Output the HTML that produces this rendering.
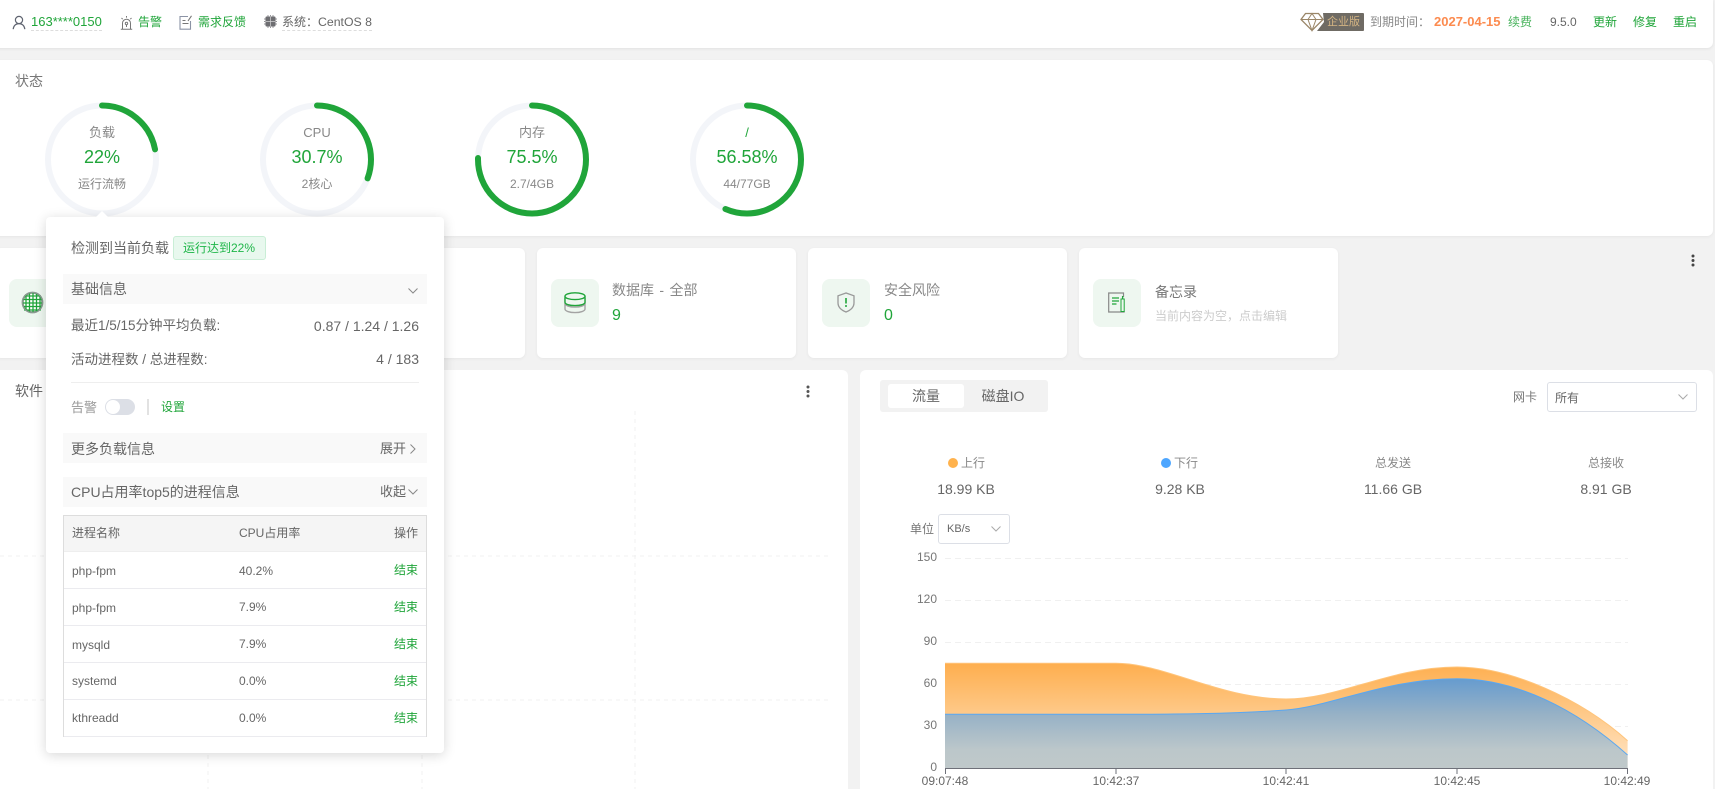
<!DOCTYPE html>
<html lang="zh">
<head>
<meta charset="utf-8">
<title>状态</title>
<style>
html,body{margin:0;padding:0;width:1715px;height:789px;overflow:hidden;background:#f2f2f2;}
body{position:relative;font-family:"Liberation Sans","Noto Sans CJK SC",sans-serif;font-size:12px;color:#666;}
.b{position:absolute;background:#fff;box-sizing:border-box;}
.t{position:absolute;white-space:nowrap;line-height:20px;height:20px;}
.c{transform:translateX(-50%);text-align:center;}
.r{transform:translateX(-100%);}
.g{color:#20a53a;}
svg{position:absolute;overflow:visible;}
.card{top:248px;width:259px;height:110px;border-radius:6px;box-shadow:0 1px 3px rgba(0,0,0,.05);}
.ib{position:absolute;top:279px;width:48px;height:48px;border-radius:8px;background:#eef7f0;}
.bar{position:absolute;left:63px;width:364px;height:30px;background:#f9f9f9;}
.row{position:absolute;left:64px;width:362px;border-bottom:1px solid #ebebef;box-sizing:border-box;}
</style>
</head>
<body>
<!-- header -->
<div class="b" style="left:-10px;top:0;width:1722.5px;height:48px;border-radius:0 0 6px 6px;box-shadow:0 1px 3px rgba(0,0,0,.07)"></div>
<svg style="left:12px;top:15px" width="14" height="15" viewBox="0 0 14 15" fill="none" stroke="#5f6470" stroke-width="1.2"><circle cx="7" cy="5" r="3.6"/><path d="M1.2 14.2c.3-3.6 2.7-5.6 5.8-5.6s5.500 2 5.800 5.600"/></svg>
<div class="t g" style="left:31px;top:12px;font-size:13px;border-bottom:1px dashed #ddd;height:18px">163****0150</div>
<svg style="left:120px;top:15px" width="13" height="15" viewBox="0 0 13 15" fill="none" stroke="#777" stroke-width="1"><path d="M2.500 14V8.200a4 4 0 0 1 8 0V14M.8 14.300h11.400M6.500 1v1.600M1.500 3l1.200 1.200M11.500 3l-1.200 1.200"/><circle cx="6.500" cy="8.500" r="1.200"/><path d="M6.500 9.700V12"/></svg>
<div class="t g" style="left:138px;top:12px">告警</div>
<svg style="left:179px;top:15px" width="14" height="15" viewBox="0 0 14 15" fill="none" stroke="#777" stroke-width="1.100"><path d="M9 1.500H1v12.700h10.500V6" stroke="#8b93a5"/><path d="M12.500 .8 9 6M3.500 5.500h3M3.500 8.500h6"/></svg>
<div class="t g" style="left:198px;top:12px">需求反馈</div>
<svg style="left:264px;top:15px" width="13" height="13" viewBox="0 0 13 13"><rect x="1.500" y="1.500" width="10" height="10" rx="1" fill="#6e6e72"/><path d="M4 0v13M6.500 0v13M9 0v13M0 4h13M0 6.500h13M0 9h13" stroke="#6e6e72" stroke-width=".7"/><path d="M6.500 1.500v10M1.500 6.500h10" stroke="#fff" stroke-width=".7" opacity=".7"/></svg>
<div style="position:absolute;left:282px;top:30px;width:90px;height:0;border-top:1px dashed #ddd"></div>
<div class="t" style="left:282px;top:12px">系统：</div>
<div class="t" style="left:318px;top:12px;font-size:12.300px">CentOS 8</div>

<svg style="left:1300px;top:12px" width="24" height="20" viewBox="0 0 24 20" fill="#fff" stroke="#9a8668" stroke-width="1.300"><path d="M5.500 1.500h13l4.500 6L12 18.500 1 7.500z"/><path d="M1 7.500h22M8 7.500 12 18.500 16 7.500M8 7.500l4-6 4 6" stroke-width="1"/></svg>
<div style="position:absolute;left:1315px;top:13px;width:49px;height:18px;background:#6f6b64;clip-path:polygon(8px 0,100% 0,100% 100%,2px 100%,9px 50%);border-radius:1px"></div>
<div class="t" style="left:1327px;top:12px;font-size:11px;color:#d4b483">企业版</div>
<div class="t" style="left:1370px;top:12px;color:#888">到期时间：</div>
<div class="t" style="left:1434px;top:12px;font-size:13px;font-weight:bold;color:#fc8b4f">2027-04-15</div>
<div class="t" style="left:1508px;top:12px;color:#48b35c">续费</div>
<div class="t" style="left:1550px;top:12px;font-size:12px">9.5.0</div>
<div class="t g" style="left:1593px;top:12px">更新</div>
<div class="t g" style="left:1633px;top:12px">修复</div>
<div class="t g" style="left:1673px;top:12px">重启</div>

<!-- status -->
<div class="b" style="left:-10px;top:60px;width:1722.5px;height:176px;border-radius:6px;box-shadow:0 1px 3px rgba(0,0,0,.05)"></div>
<div class="t" style="left:15px;top:71px;font-size:14px;color:#777">状态</div>
<svg style="left:0;top:0" width="900" height="240" fill="none" stroke-width="6">
  <g stroke="#f3f5f9"><circle cx="102" cy="159.500" r="54"/><circle cx="317" cy="159.500" r="54"/><circle cx="532" cy="159.500" r="54"/><circle cx="747" cy="159.500" r="54"/></g>
  <g stroke="#20a53a" stroke-linecap="round">
    <circle cx="102" cy="159.500" r="54" pathLength="100" stroke-dasharray="22 100" transform="rotate(-90 102 159.500)"/>
    <circle cx="317" cy="159.500" r="54" pathLength="100" stroke-dasharray="30.700 100" transform="rotate(-90 317 159.500)"/>
    <circle cx="532" cy="159.500" r="54" pathLength="100" stroke-dasharray="75.500 100" transform="rotate(-90 532 159.500)"/>
    <circle cx="747" cy="159.500" r="54" pathLength="100" stroke-dasharray="56.580 100" transform="rotate(-90 747 159.500)"/>
  </g>
</svg>
<div class="t c" style="left:102px;top:123px;font-size:13px;color:#888">负载</div>
<div class="t c g" style="left:102px;top:147px;font-size:18px">22%</div>
<div class="t c" style="left:102px;top:174px;color:#888">运行流畅</div>
<div class="t c" style="left:317px;top:123px;font-size:13px;color:#888">CPU</div>
<div class="t c g" style="left:317px;top:147px;font-size:18px">30.7%</div>
<div class="t c" style="left:317px;top:174px;color:#888">2核心</div>
<div class="t c" style="left:532px;top:123px;font-size:13px;color:#888">内存</div>
<div class="t c g" style="left:532px;top:147px;font-size:18px">75.5%</div>
<div class="t c" style="left:532px;top:174px;color:#888">2.7/4GB</div>
<div class="t c" style="left:747px;top:123px;font-size:13px;color:#20a53a">/</div>
<div class="t c g" style="left:747px;top:147px;font-size:18px">56.58%</div>
<div class="t c" style="left:747px;top:174px;color:#888">44/77GB</div>

<!-- cards -->
<div class="b card" style="left:-5px"></div>
<div class="b card" style="left:266px"></div>
<div class="b card" style="left:537px"></div>
<div class="b card" style="left:808px"></div>
<div class="b card" style="left:1079px"></div>

<div class="ib" style="left:9px"></div>
<svg style="left:22px;top:292px" width="21" height="21" viewBox="0 0 21 21" fill="none"><circle cx="10.500" cy="10.500" r="9.600" fill="#fff" stroke="#7e9486" stroke-width="1.600"/><path d="M2 4h17M1 7.500h19M1 11h19M1 14.500h19M2 18h17M4 2v17M7.500 1v19M11 1v19M14.500 1v19M18 3v15" stroke="#20a53a" stroke-width="1.300"/><circle cx="10.500" cy="10.500" r="10.200" stroke="#8a9a90" stroke-width="1.400"/></svg>

<div class="ib" style="left:551px"></div>
<svg style="left:564px;top:292px" width="22" height="22" viewBox="0 0 22 22" fill="none" stroke-width="1.400"><path d="M1 6v11c0 2 4.500 3.600 10 3.600S21 19 21 17V6" stroke="#a3a3a3"/><path d="M1 11.500c0 2 4.500 3.600 10 3.600s10-1.600 10-3.600" stroke="#a3a3a3"/><path d="M1 4.200v6c0 2 4.500 3.400 10 3.400s10-1.400 10-3.400v-6" stroke="#20a53a" fill="#eef7f0"/><ellipse cx="11" cy="4.200" rx="10" ry="3.400" stroke="#20a53a" fill="#eef7f0"/></svg>
<div class="t" style="left:612px;top:280px;font-size:14px;color:#888;word-spacing:1.500px">数据库 - 全部</div>
<div class="t g" style="left:612px;top:306px;font-size:16px">9</div>

<div class="ib" style="left:822px"></div>
<svg style="left:837px;top:292px" width="18" height="21" viewBox="0 0 18 21" fill="none"><path d="M9 1 1 3.800v7c0 4.500 3.500 7.500 8 9.200 4.500-1.700 8-4.700 8-9.200v-7z" stroke="#999" stroke-width="1.300"/><path d="M9 6v5.500" stroke="#20a53a" stroke-width="1.600"/><circle cx="9" cy="14" r="1" fill="#20a53a"/></svg>
<div class="t" style="left:884px;top:280px;font-size:14px;color:#888">安全风险</div>
<div class="t g" style="left:884px;top:306px;font-size:16px">0</div>

<div class="ib" style="left:1093px"></div>
<svg style="left:1108px;top:292px" width="18" height="21" viewBox="0 0 18 21" fill="none"><path d="M15.500 5V1H.7v19h16" stroke="#888" stroke-width="1.200"/><rect x="13" y="7" width="3.200" height="12.500" stroke="#20a53a" stroke-width="1"/><path d="M14.600 4v3M4 6h7M4 9h7M4 12h4.500" stroke="#20a53a" stroke-width="1.300"/></svg>
<div class="t" style="left:1155px;top:282px;font-size:14px;color:#777">备忘录</div>
<div class="t" style="left:1155px;top:306px;color:#ccc">当前内容为空，点击编辑</div>

<svg style="left:1691px;top:254px" width="4" height="13" viewBox="0 0 4 13" fill="#444"><circle cx="2" cy="2" r="1.500"/><circle cx="2" cy="6.500" r="1.500"/><circle cx="2" cy="11" r="1.500"/></svg>

<!-- left panel -->
<div class="b" style="left:-10px;top:370px;width:858px;height:430px;border-radius:6px"></div>
<svg style="left:0;top:370px" width="848" height="419" fill="none" stroke="#f1f1f1" stroke-dasharray="4 4"><path d="M208 41V419M422 41V419M635 41V419M0 186H830M0 330H830"/></svg>
<div class="t" style="left:15px;top:381px;font-size:14px">软件</div>
<svg style="left:806px;top:385px" width="4" height="13" viewBox="0 0 4 13" fill="#555"><circle cx="2" cy="2" r="1.500"/><circle cx="2" cy="6.500" r="1.500"/><circle cx="2" cy="11" r="1.500"/></svg>

<!-- right panel -->
<div class="b" style="left:860px;top:370px;width:852.500px;height:430px;border-radius:6px"></div>
<div style="position:absolute;left:880px;top:380px;width:168px;height:32px;background:#f2f2f2;border-radius:3px"></div>
<div style="position:absolute;left:888px;top:384px;width:76px;height:24px;background:#fff;border-radius:3px"></div>
<div class="t c" style="left:926px;top:386px;font-size:14px">流量</div>
<div class="t c" style="left:1003px;top:386px;font-size:14px">磁盘IO</div>
<div class="t" style="left:1513px;top:387px;color:#777">网卡</div>
<div class="b" style="left:1547px;top:382px;width:150px;height:30px;border:1px solid #dcdfe6;border-radius:3px"></div>
<div class="t" style="left:1555px;top:388px">所有</div>
<svg style="left:1678px;top:394px" width="10" height="6" fill="none" stroke="#aaa"><path d="M.5.500 5 5 9.500.500"/></svg>

<div style="position:absolute;left:948px;top:458px;width:10px;height:10px;border-radius:50%;background:#ffb24d"></div>
<div class="t" style="left:961px;top:453px;color:#888">上行</div>
<div style="position:absolute;left:1161px;top:458px;width:10px;height:10px;border-radius:50%;background:#4da6ff"></div>
<div class="t" style="left:1174px;top:453px;color:#888">下行</div>
<div class="t c" style="left:1393px;top:453px;color:#888">总发送</div>
<div class="t c" style="left:1606px;top:453px;color:#888">总接收</div>
<div class="t c" style="left:966px;top:479px;font-size:14px">18.99 KB</div>
<div class="t c" style="left:1180px;top:479px;font-size:14px">9.28 KB</div>
<div class="t c" style="left:1393px;top:479px;font-size:14px">11.66 GB</div>
<div class="t c" style="left:1606px;top:479px;font-size:14px">8.91 GB</div>

<div class="t" style="left:910px;top:519px;color:#777">单位</div>
<div class="b" style="left:938px;top:514px;width:72px;height:30px;border:1px solid #dcdfe6;border-radius:3px"></div>
<div class="t" style="left:947px;top:519px;font-size:11px">KB/s</div>
<svg style="left:991px;top:526px" width="10" height="6" fill="none" stroke="#aaa"><path d="M.5.500 5 5 9.500.500"/></svg>

<svg style="left:0;top:0" width="1715" height="789">
  <defs>
    <linearGradient id="o" x1="0" y1="663" x2="0" y2="768" gradientUnits="userSpaceOnUse"><stop offset="0" stop-color="#feae4e"/><stop offset="1" stop-color="#ffe6c8"/></linearGradient>
    <linearGradient id="bl" x1="0" y1="678" x2="0" y2="768" gradientUnits="userSpaceOnUse"><stop offset="0" stop-color="#659bcf"/><stop offset=".4" stop-color="#96b1c6"/><stop offset=".8" stop-color="#bcc7ca"/><stop offset="1" stop-color="#bfc8ca"/></linearGradient>
  </defs>
  <path d="M945 558.500H1628M945 600.500H1628M945 642.500H1628M945 684.500H1628M945 726.500H1628" stroke="#f0f0f0" stroke-dasharray="6 4" fill="none"/>
  <path d="M945 663.300H1116C1165 663.300 1220 699 1286 699C1340 699 1390 667 1457 667C1510 667 1580 698 1627.600 740.700V768H945Z" fill="url(#o)"/>
  <path d="M945 663.300H1116C1165 663.300 1220 699 1286 699C1340 699 1390 667 1457 667C1510 667 1580 698 1627.600 740.700" fill="none" stroke="#ffc47a"/>
  <path d="M945 714.300H1116C1170 714.300 1230 714 1286 710C1330 707 1385 678.700 1457 678.700C1515 678.700 1575 708 1627.600 755V768H945Z" fill="url(#bl)"/>
  <path d="M945 714.300H1116C1170 714.300 1230 714 1286 710C1330 707 1385 678.700 1457 678.700C1515 678.700 1575 708 1627.600 755" fill="none" stroke="#5aa7f0"/>
  <path d="M945 768.500H1628M945.500 768V774M1116 768V774M1286 768V774M1457 768V774M1627.500 768V774" stroke="#6e7079" fill="none"/>
</svg>
<div class="t r" style="left:937px;top:547px;color:#777">150</div>
<div class="t r" style="left:937px;top:589px;color:#777">120</div>
<div class="t r" style="left:937px;top:631px;color:#777">90</div>
<div class="t r" style="left:937px;top:673px;color:#777">60</div>
<div class="t r" style="left:937px;top:715px;color:#777">30</div>
<div class="t r" style="left:937px;top:757px;color:#777">0</div>
<div class="t c" style="left:945px;top:771px">09:07:48</div>
<div class="t c" style="left:1116px;top:771px">10:42:37</div>
<div class="t c" style="left:1286px;top:771px">10:42:41</div>
<div class="t c" style="left:1457px;top:771px">10:42:45</div>
<div class="t c" style="left:1627px;top:771px">10:42:49</div>

<!-- popover -->
<div class="b" style="left:46px;top:217px;width:398px;height:536px;border-radius:4px;box-shadow:0 2px 12px rgba(0,0,0,.16)"></div>
<div style="position:absolute;left:96px;top:211px;width:0;height:0;border-left:6px solid transparent;border-right:6px solid transparent;border-bottom:6px solid #fff"></div>
<div class="t" style="left:71px;top:238px;font-size:14px;color:#666">检测到当前负载</div>
<div style="position:absolute;left:173px;top:236px;width:93px;height:24px;box-sizing:border-box;background:#e8f8ee;border:1px solid #c9eed6;border-radius:3px"></div>
<div class="t" style="left:183px;top:238px;color:#20b64a">运行达到22%</div>

<div class="bar" style="top:274px"></div>
<div class="t" style="left:71px;top:279px;font-size:14px">基础信息</div>
<svg style="left:408px;top:288px" width="10" height="6" fill="none" stroke="#888"><path d="M.5.500 5 5 9.500.500"/></svg>
<div class="t" style="left:71px;top:316px;font-size:13.500px">最近1/5/15分钟平均负载:</div>
<div class="t r" style="left:419px;top:316px;font-size:14px">0.87 / 1.24 / 1.26</div>
<div class="t" style="left:71px;top:350px;font-size:13.500px">活动进程数 / 总进程数:</div>
<div class="t r" style="left:419px;top:349px;font-size:14px">4 / 183</div>
<div style="position:absolute;left:71px;top:382px;width:348px;height:1px;background:#eee"></div>
<div class="t" style="left:71px;top:398px;font-size:13px;color:#999">告警</div>
<div style="position:absolute;left:105px;top:399px;width:30px;height:16px;border-radius:8px;background:#dcdfe6"></div>
<div style="position:absolute;left:106px;top:400px;width:14px;height:14px;border-radius:50%;background:#fff"></div>
<div style="position:absolute;left:147px;top:399px;width:2px;height:16px;background:#e2e2e2"></div>
<div class="t g" style="left:161px;top:397px">设置</div>

<div class="bar" style="top:433px"></div>
<div class="t" style="left:71px;top:439px;font-size:14px">更多负载信息</div>
<div class="t" style="left:380px;top:439px;font-size:13px">展开</div>
<svg style="left:410px;top:444px" width="6" height="10" fill="none" stroke="#888"><path d="M.5.500 5 5 .5 9.500"/></svg>
<div class="bar" style="top:477px"></div>
<div class="t" style="left:71px;top:482px;font-size:14px">CPU占用率top5的进程信息</div>
<div class="t" style="left:380px;top:482px;font-size:13px">收起</div>
<svg style="left:408px;top:489px" width="10" height="6" fill="none" stroke="#888"><path d="M.5.500 5 5 9.500.500"/></svg>

<div style="position:absolute;left:63px;top:515px;width:364px;height:222px;box-sizing:border-box;border:1px solid #ddd;border-bottom:none"></div>
<div class="row" style="top:516px;height:36px;background:#f5f5f5;border-bottom-color:#eee"></div>
<div class="row" style="top:552px;height:37px"></div>
<div class="row" style="top:589px;height:37px"></div>
<div class="row" style="top:626px;height:37px"></div>
<div class="row" style="top:663px;height:37px"></div>
<div class="row" style="top:700px;height:37px"></div>
<div class="t" style="left:72px;top:523px">进程名称</div>
<div class="t" style="left:239px;top:523px">CPU占用率</div>
<div class="t r" style="left:418px;top:523px">操作</div>

<div class="t" style="left:72px;top:561px">php-fpm</div><div class="t" style="left:239px;top:561px">40.2%</div><div class="t r g" style="left:418px;top:560px">结束</div>
<div class="t" style="left:72px;top:598px">php-fpm</div><div class="t" style="left:239px;top:597px">7.9%</div><div class="t r g" style="left:418px;top:597px">结束</div>
<div class="t" style="left:72px;top:635px">mysqld</div><div class="t" style="left:239px;top:634px">7.9%</div><div class="t r g" style="left:418px;top:634px">结束</div>
<div class="t" style="left:72px;top:671px">systemd</div><div class="t" style="left:239px;top:671px">0.0%</div><div class="t r g" style="left:418px;top:671px">结束</div>
<div class="t" style="left:72px;top:708px">kthreadd</div><div class="t" style="left:239px;top:708px">0.0%</div><div class="t r g" style="left:418px;top:708px">结束</div>
</body>
</html>
